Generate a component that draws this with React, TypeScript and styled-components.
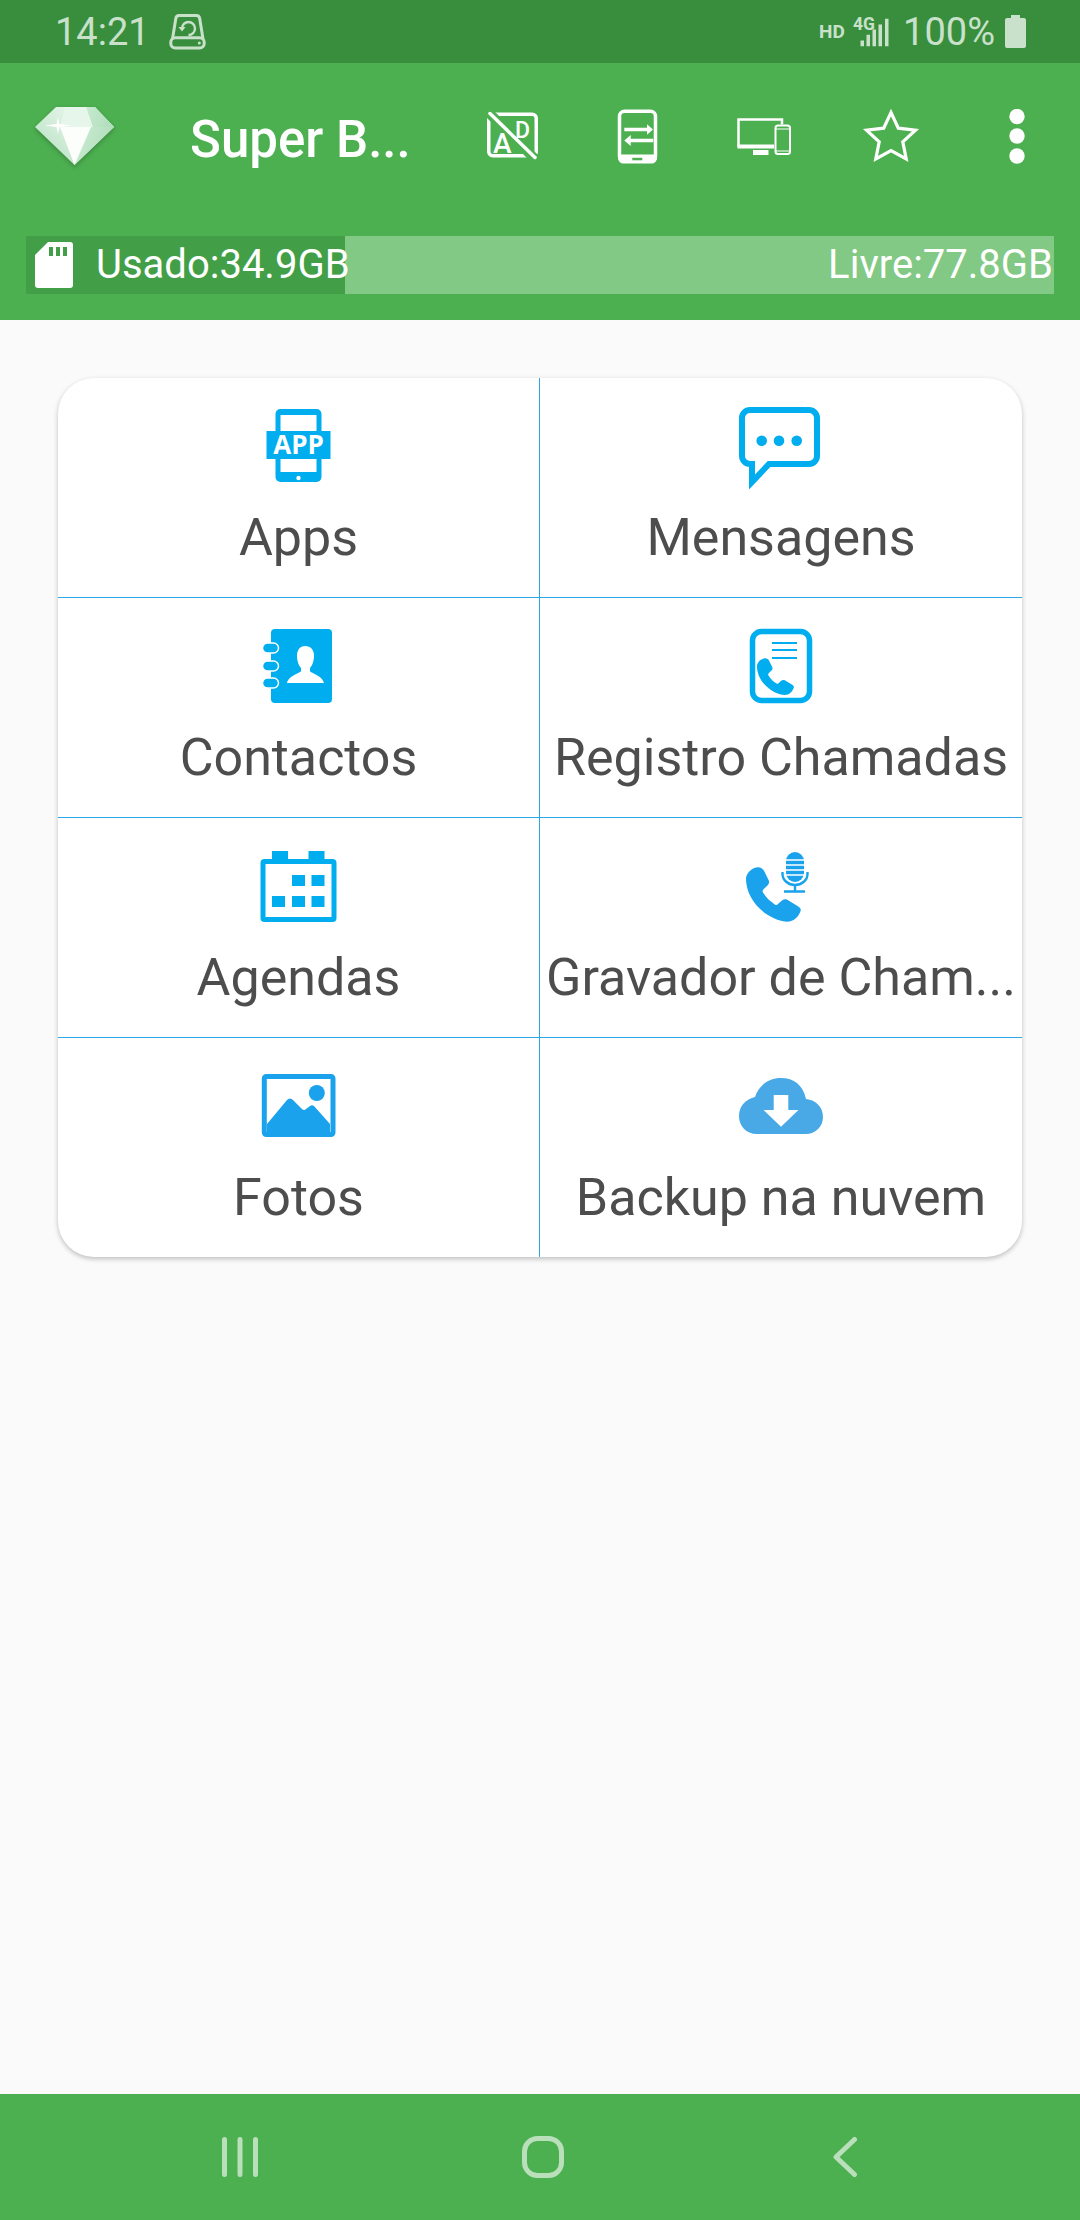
import styled, { createGlobalStyle } from "styled-components";

const GlobalStyle = createGlobalStyle`
  html, body {
    margin: 0;
    padding: 0;
    background: #fafafa;
  }
  body {
    font-family: Roboto, "Liberation Sans", sans-serif;
  }
`;

const Screen = styled.div`
  width: 1080px;
  height: 2220px;
  display: flex;
  flex-direction: column;
  background: #fafafa;
  overflow: hidden;
`;

const StatusBar = styled.div`
  height: 63px;
  flex: none;
  display: flex;
  align-items: center;
  padding: 0 54px 0 55px;
  background: #388e3c;
  color: #c9e1cb;
  font-size: 38px;
`;

const StatusTime = styled.span`
  margin-right: 19px;
`;

const StatusRight = styled.div`
  margin-left: auto;
  display: flex;
  align-items: center;
`;

const Percent = styled.span`
  margin: 0 10px 0 12px;
`;

const AppBar = styled.header`
  flex: none;
  height: 257px;
  background: #4caf50;
  color: #fff;
`;

const ToolRow = styled.div`
  height: 147px;
  display: flex;
  align-items: center;
`;

const LogoSlot = styled.div`
  width: 149px;
  flex: none;
  display: flex;
  justify-content: center;
`;

const Title = styled.h1`
  flex: 1;
  margin: 0;
  padding: 5px 0 0 41px;
  font-size: 51px;
  font-weight: 500;
  white-space: nowrap;
`;

const ActionSlot = styled.div`
  width: 126.25px;
  flex: none;
  display: flex;
  justify-content: center;
  align-items: center;
`;

const StorageBar = styled.div`
  margin: 26px 26px 0 26px;
  height: 58px;
  display: flex;
  font-size: 40px;
  line-height: 58px;
  background: #82c985;
  width: 1028px;
`;

const UsedPart = styled.div`
  display: flex;
  align-items: center;
  background: #429f47;
  padding-left: 9px;
  white-space: nowrap;

  & > svg {
    flex: none;
  }
`;

const UsedText = styled.span`
  margin-left: 23px;
`;

const FreeText = styled.span`
  margin-left: auto;
  padding-right: 1px;
`;

const Main = styled.main`
  flex: 1;
  padding: 58px 58px 0;
`;

const Card = styled.section`
  display: grid;
  grid-template-columns: 482px 482px;
  grid-template-rows: repeat(3, 220px) 219px;
  background: #fff;
  border-radius: 36px;
  box-shadow: 0 2px 5px rgba(0, 0, 0, 0.24);
  overflow: hidden;
`;

const Cell = styled.div<{ $left: boolean; $last: boolean }>`
  display: flex;
  flex-direction: column;
  align-items: center;
  padding-top: 23px;
  min-width: 0;
  box-sizing: border-box;
  border-right: ${(p) => (p.$left ? "1px solid #2aa9e6" : "none")};
  border-bottom: ${(p) => (p.$last ? "none" : "1px solid #2aa9e6")};
`;

const Label = styled.div`
  margin-top: 17px;
  font-size: 52px;
  line-height: 60px;
  color: #4d4d4d;
  white-space: nowrap;
`;

const NavBar = styled.nav`
  flex: none;
  height: 126px;
  background: #4caf50;
  display: flex;
  align-items: center;
  justify-content: center;
  gap: 263px;
`;

const BLUE = "#00adef";
const PHOTO_BLUE = "#1aa3ec";
const STATUS_INK = "#c9e1cb";
const NAV_INK = "#b9dfbb";

const handset =
  "M22 1C27 1 31 4 33 8L41 24C43 28 42 31 39 34L31 42C30 44 30 45 31 47C37 57 44 63 53 69C55 70 57 70 58 68L66 61C69 59 72 59 75 60L93 71C98 74 101 77 99 81C96 90 88 100 74 100C35 96 0 60 0 22C0 12 11 1 22 1Z";

function AppsIcon() {
  return (
    <svg width="90" height="90" viewBox="0 0 90 90">
      <rect x="21.5" y="8" width="46" height="73" rx="5" fill={BLUE} />
      <rect x="26.5" y="14" width="36" height="57" fill="#fff" />
      <rect x="12.5" y="30" width="64" height="28" fill={BLUE} />
      <circle cx="44.5" cy="77" r="2.2" fill="#fff" />
      <text x="44.5" y="53" textAnchor="middle" fontFamily="Open Sans" fontWeight="700" fontSize="26" fill="#fff">
        APP
      </text>
    </svg>
  );
}

function MessagesIcon() {
  return (
    <svg width="90" height="90" viewBox="0 0 90 90">
      <path
        d="M14 9h59a8 8 0 0 1 8 8v38a8 8 0 0 1-8 8H33L16 81V63h-2a8 8 0 0 1-8-8V17a8 8 0 0 1 8-8z"
        fill="none"
        stroke={BLUE}
        strokeWidth="6"
      />
      <circle cx="25.7" cy="39.7" r="5.3" fill={BLUE} />
      <circle cx="43" cy="39.7" r="5.3" fill={BLUE} />
      <circle cx="60.7" cy="39.7" r="5.3" fill={BLUE} />
    </svg>
  );
}

function ContactsIcon() {
  return (
    <svg width="90" height="90" viewBox="0 0 90 90">
      <rect x="17" y="8" width="61" height="74" rx="4" fill={BLUE} />
      {[27, 45, 62].map((y) => (
        <rect key={y} x="8.5" y={y - 5} width="16" height="10" rx="5" fill={BLUE} stroke="#fff" strokeWidth="1.5" />
      ))}
      <path
        d="M51 25c6 0 9 4 9 10 0 5-2 10-4 12v3c0 2 12 4 14 12H33c2-8 14-10 14-12v-3c-2-2-4-7-4-12 0-6 3-10 8-10z"
        fill="#fff"
      />
    </svg>
  );
}

function CallLogIcon() {
  return (
    <svg width="90" height="90" viewBox="0 0 90 90">
      <rect x="16.5" y="10.5" width="57" height="69" rx="9" fill="none" stroke={BLUE} strokeWidth="5.5" />
      <path d="M36 22h25M36 29h25M36 37h25" stroke={BLUE} strokeWidth="2" />
      <path d={handset} fill={BLUE} transform="translate(21 37) scale(0.37)" />
    </svg>
  );
}

function CalendarIcon() {
  return (
    <svg width="90" height="90" viewBox="0 0 90 90">
      <rect x="9" y="20.5" width="71" height="58" rx="1.5" fill="none" stroke={BLUE} strokeWidth="5" />
      <path d="M18 10h16v9H18zM54.500 10h16v9h-16z" fill={BLUE} />
      <path d="M38 34h13v11H38zM57.500 34h13v11h-13zM18 55h13v11H18zM38 55h13v11H38zM57.500 55h13v11h-13z" fill={BLUE} />
    </svg>
  );
}

function RecorderIcon() {
  return (
    <svg width="90" height="90" viewBox="0 0 90 90">
      <path d={handset} fill={PHOTO_BLUE} transform="translate(10 25.700) scale(0.55)" />
      <rect x="50" y="11" width="18" height="30" rx="9" fill={PHOTO_BLUE} />
      <path d="M50 19h18M50 24h18M50 29h18M50 34h18" stroke="#fff" strokeWidth="1.6" />
      <path d="M46.500 31v2a12.500 11 0 0 0 25 0v-2" fill="none" stroke={PHOTO_BLUE} strokeWidth="2.4" />
      <path d="M59 44v6M48 50.500h21" stroke={PHOTO_BLUE} strokeWidth="2.4" />
    </svg>
  );
}

function PhotosIcon() {
  return (
    <svg width="90" height="90" viewBox="0 0 90 90">
      <rect x="10.300" y="15.500" width="68.700" height="58" rx="2" fill="none" stroke={PHOTO_BLUE} strokeWidth="5" />
      <circle cx="62.800" cy="32" r="8" fill={PHOTO_BLUE} />
      <path
        d="M13 63L33 39c2-2 4-2 6 0L48 48c1.500 1.500 3 1 4 0l4-3c1-1 3-1 4 0L76 63v11H13z"
        fill={PHOTO_BLUE}
      />
    </svg>
  );
}

function CloudIcon() {
  return (
    <svg width="90" height="90" viewBox="0 0 90 90">
      <path
        d="M21 73C10 73 3 65 3 55 3 45 10 38 19 36 23 24 33 17 45 17 58 17 67 24 70 38 80 39 87 46 87 56 87 66 79 73 70 73Z"
        fill="#48a9e6"
      />
      <path d="M37.700 34h14.600v15h10.200L45 65.700 27.500 49h10.200z" fill="#fff" />
    </svg>
  );
}

function Diamond() {
  return (
    <svg width="79" height="60" viewBox="0 0 79 60" style={{ filter: "drop-shadow(0 2px 2px rgba(0,0,0,0.22))" }}>
      <defs>
        <linearGradient id="diamondLeft" x1="0.8" y1="0" x2="0.1" y2="0.6">
          <stop offset="0" stopColor="#f4fbf5" />
          <stop offset="1" stopColor="#c3e6cc" />
        </linearGradient>
        <linearGradient id="diamondRight" x1="0" y1="0" x2="1" y2="0.4">
          <stop offset="0" stopColor="#cfeed6" />
          <stop offset="1" stopColor="#aedcb9" />
        </linearGradient>
        <filter id="diamondSoft">
          <feGaussianBlur stdDeviation="0.7" />
        </filter>
      </defs>
      <polygon points="0,20 21,0 60,0 79,20 39.500,58" fill="url(#diamondLeft)" />
      <polygon points="51,0 60,0 79,20 56,20 39.500,58 58,20" fill="url(#diamondRight)" />
      <polygon points="56,20 79,20 39.500,58" fill="url(#diamondRight)" />
      <polygon points="25,20 56,20 39.500,58" fill="#fbfefb" />
      <polygon points="30,0 51,0 56,20 25,20" fill="#e6f6ea" />
      <path d="M23 10l1.500 7 12 1.500-12 1.500-1.500 7-1.500-7-12-1.500 12-1.500z" fill="#fff" filter="url(#diamondSoft)" />
    </svg>
  );
}

function NoAdsIcon() {
  return (
    <svg width="56" height="52" viewBox="0 0 56 52" fontFamily="Roboto" fontWeight="500" fill="#fff">
      <rect x="4.750" y="3.250" width="47.500" height="41.500" rx="4" fill="none" stroke="#fff" strokeWidth="3.500" />
      <path d="M3 0l48 48" stroke="#4caf50" strokeWidth="10" />
      <path d="M6 2.500L51 46.500" stroke="#fff" strokeWidth="3.500" strokeLinecap="round" />
      <text x="9" y="41.500" fontSize="28">A</text>
      <text x="31" y="26.500" fontSize="23">D</text>
    </svg>
  );
}

function TransferIcon() {
  return (
    <svg width="42" height="56" viewBox="0 0 42 56" fill="#fff">
      <rect x="2.500" y="2.300" width="36" height="50" rx="5" fill="none" stroke="#fff" strokeWidth="3.500" />
      <path d="M1 45.500h39v3.500a5.500 5.500 0 0 1-5.500 5.500h-28A5.500 5.500 0 0 1 1 49z" />
      <rect x="15.300" y="48.800" width="10" height="2.500" fill="#4caf50" />
      <path d="M7.300 18.800h22.700v-3.500l6 5.200-6 5.200v-3.500H7.300z" />
      <path d="M36.300 29.800H13.700v-3.800l-6.400 5.500 6.400 5.500v-3.800h22.600z" />
    </svg>
  );
}

function DevicesIcon() {
  return (
    <svg width="54" height="38" viewBox="0 0 54 38" fill="none" stroke="#fff">
      <path d="M45 6.500V1.500H1.500V29" strokeWidth="2.500" />
      <path d="M0.500 26.500h36.500v4H0.500zM16 32h15.500v5H16z" fill="#fff" stroke="none" />
      <rect x="38.500" y="7.500" width="14.500" height="28.500" rx="2.500" strokeWidth="2" />
      <path d="M39 11h14M39 33h14" strokeWidth="1.200" />
    </svg>
  );
}

function StarIcon() {
  return (
    <svg width="54" height="52" viewBox="0 0 54 52" overflow="visible">
      <path
        d="M27 1.500l7.300 15.700 17.200 2-12.700 11.700 3.400 17L27 39.500l-15.200 8.400 3.400-17L2.500 19.200l17.200-2z"
        fill="none"
        stroke="#fff"
        strokeWidth="3.200"
      />
    </svg>
  );
}

function MoreIcon() {
  return (
    <svg width="16" height="56" viewBox="0 0 16 56" fill="#fff">
      <circle cx="8" cy="7.500" r="7.700" />
      <circle cx="8" cy="27" r="7.700" />
      <circle cx="8" cy="47" r="7.700" />
    </svg>
  );
}

function SdCardIcon() {
  return (
    <svg width="38" height="46" viewBox="0 0 38 46">
      <path d="M13 0h22a3 3 0 0 1 3 3v40a3 3 0 0 1-3 3H3a3 3 0 0 1-3-3V13z" fill="#fff" />
      <path d="M14 5h4v9h-4zM21 5h4v9h-4zM28 5h4v9h-4z" fill="#429f47" />
    </svg>
  );
}

function DriveIcon() {
  return (
    <svg width="37" height="37" viewBox="0 0 37 37" fill="none" stroke={STATUS_INK} strokeWidth="3">
      <path d="M3.500 26L6.800 5.500C7.200 3.500 8.200 2.500 10 2.500h17.500c1.800 0 2.800 1 3.200 3L34 26" />
      <rect x="1.800" y="24.800" width="33.400" height="10.200" rx="4.500" />
      <path d="M13 15.500a6.500 6.500 0 1 1 6.500 6.500" strokeWidth="2.400" />
      <path d="M9.500 14l3.500 4.500 3.500-4.500z" fill={STATUS_INK} stroke="none" />
      <circle cx="30.300" cy="30" r="1.500" fill={STATUS_INK} stroke="none" />
    </svg>
  );
}

function NetworkIcon() {
  return (
    <svg width="72" height="34" viewBox="0 0 72 34" fill={STATUS_INK} fontFamily="Roboto" fontWeight="700">
      <text x="0" y="23.200" fontSize="19">HD</text>
      <text x="34" y="14.500" fontSize="17.500">4G</text>
      <path d="M41.500 25.500h3.500v5.700h-3.500zM47.500 19.800h3.500v11.400h-3.500zM53.500 14.500h3.500v16.700h-3.500zM59.500 9.500h3.500v21.700h-3.500zM66 3.800h3.500v27.400H66z" />
    </svg>
  );
}

function BatteryIcon() {
  return (
    <svg width="21" height="33" viewBox="0 0 21 33">
      <path d="M6 0h9v3h4a2 2 0 0 1 2 2v26a2 2 0 0 1-2 2H2a2 2 0 0 1-2-2V5a2 2 0 0 1 2-2h4z" fill={STATUS_INK} />
    </svg>
  );
}

function NavRecents() {
  return (
    <svg width="37" height="40" viewBox="0 0 37 40">
      <path d="M2.500 2.500v35M18 2.500v35M33.500 2.500v35" stroke={NAV_INK} strokeWidth="5" strokeLinecap="round" />
    </svg>
  );
}

function NavHome() {
  return (
    <svg width="42" height="42" viewBox="0 0 42 42">
      <rect x="2.500" y="2.500" width="37" height="37" rx="13" fill="none" stroke={NAV_INK} strokeWidth="5" />
    </svg>
  );
}

function NavBack() {
  return (
    <svg width="30.500" height="40" viewBox="0 0 30.500 40">
      <path d="M27.500 2.500L9 20l18.500 17.500" fill="none" stroke={NAV_INK} strokeWidth="5" strokeLinecap="round" strokeLinejoin="round" />
    </svg>
  );
}

const items = [
  { label: "Apps", icon: <AppsIcon /> },
  { label: "Mensagens", icon: <MessagesIcon /> },
  { label: "Contactos", icon: <ContactsIcon /> },
  { label: "Registro Chamadas", icon: <CallLogIcon /> },
  { label: "Agendas", icon: <CalendarIcon /> },
  { label: "Gravador de Cham...", icon: <RecorderIcon /> },
  { label: "Fotos", icon: <PhotosIcon /> },
  { label: "Backup na nuvem", icon: <CloudIcon /> },
];

export default function App() {
  return (
    <Screen>
      <GlobalStyle />
      <StatusBar>
        <StatusTime>14:21</StatusTime>
        <DriveIcon />
        <StatusRight>
          <NetworkIcon />
          <Percent>100%</Percent>
          <BatteryIcon />
        </StatusRight>
      </StatusBar>
      <AppBar>
        <ToolRow>
          <LogoSlot>
            <Diamond />
          </LogoSlot>
          <Title>Super B...</Title>
          <ActionSlot>
            <NoAdsIcon />
          </ActionSlot>
          <ActionSlot>
            <TransferIcon />
          </ActionSlot>
          <ActionSlot>
            <DevicesIcon />
          </ActionSlot>
          <ActionSlot>
            <StarIcon />
          </ActionSlot>
          <ActionSlot>
            <MoreIcon />
          </ActionSlot>
        </ToolRow>
        <StorageBar>
          <UsedPart style={{ width: 310 }}>
            <SdCardIcon />
            <UsedText>Usado:34.9GB</UsedText>
          </UsedPart>
          <FreeText>Livre:77.8GB</FreeText>
        </StorageBar>
      </AppBar>
      <Main>
        <Card>
          {items.map((item, i) => (
            <Cell key={item.label} $left={i % 2 === 0} $last={i >= 6}>
              {item.icon}
              <Label>{item.label}</Label>
            </Cell>
          ))}
        </Card>
      </Main>
      <NavBar>
        <NavRecents />
        <NavHome />
        <NavBack />
      </NavBar>
    </Screen>
  );
}
